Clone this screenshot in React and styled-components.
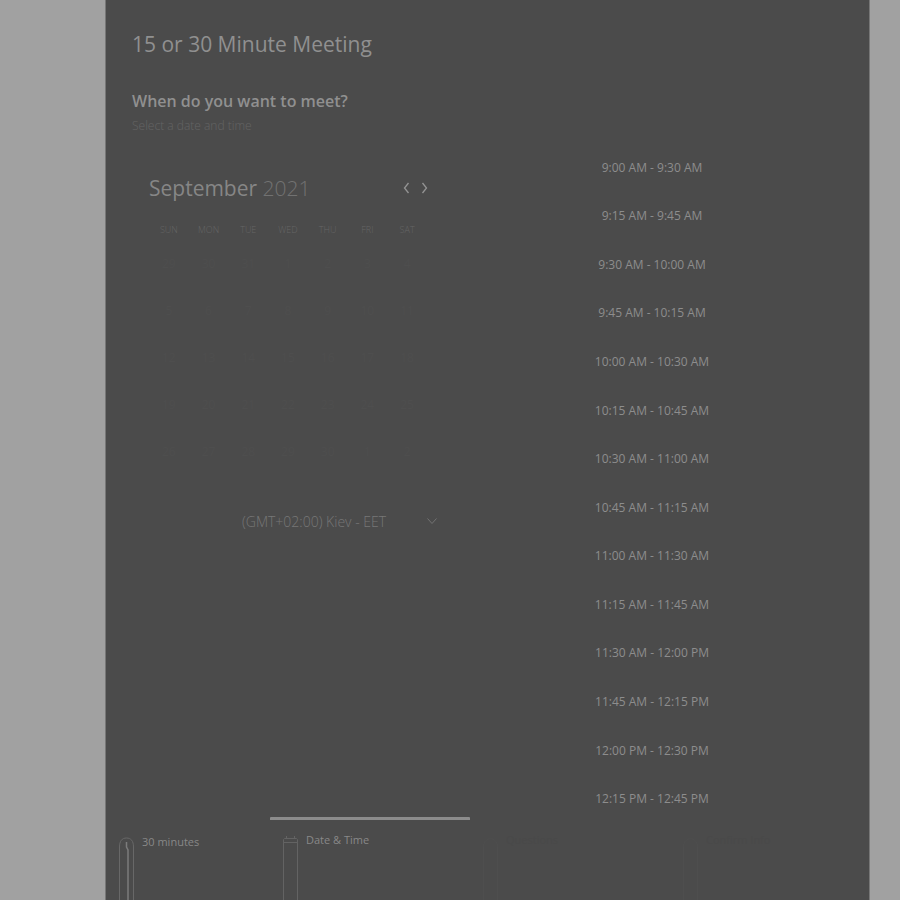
import React, { useState } from "react";
import styled, { createGlobalStyle } from "styled-components";

const GlobalStyle = createGlobalStyle`
  *, *::before, *::after { box-sizing: border-box; }
  body {
    margin: 0;
    background: #a1a1a1;
    color: #909090;
    font-family: "Open Sans", sans-serif;
  }
  button, select { font: inherit; color: inherit; background: none; border: 0; padding: 0; }
`;

const Panel = styled.main`
  display: flex;
  flex-direction: column;
  height: 100vh;
  margin: 0 30px 0 105px;
  overflow: hidden;
  background: #4b4b4b;
  border: solid #777;
  border-width: 0 1px;
`;

const Header = styled.header`
  padding: 28px 26px 8px;
`;

const Title = styled.h1`
  margin: 0 0 25px;
  font-size: 21px;
  line-height: 32px;
  font-weight: 400;
`;

const Question = styled.h2`
  margin: 0;
  font-size: 16px;
  line-height: 32px;
  font-weight: 600;
`;

const Hint = styled.p`
  margin: 0;
  font-size: 12px;
  line-height: 18px;
  font-weight: 300;
  color: #646464;
`;

const Body = styled.div`
  display: grid;
  grid-template-columns: 4fr 5fr;
  padding: 0 17px 0 26px;
`;

const DateColumn = styled.section`
  display: flex;
  flex-direction: column;
  padding: 29px 14px 0 17px;
`;

const MonthBar = styled.div`
  display: flex;
  align-items: center;
  justify-content: space-between;
  line-height: 32px;
`;

const Month = styled.h3`
  margin: 0;
  font-size: 21px;
  font-weight: 400;
  color: #868686;
`;

const Year = styled.span`
  font-weight: 300;
  color: #727272;
`;

const Arrows = styled.div`
  display: flex;
  gap: 8px;
  margin-right: 9px;
`;

const ArrowButton = styled.button`
  display: flex;
  width: 10px;
  height: 16px;
  align-items: center;
  justify-content: center;
  color: #949494;
`;

const Calendar = styled.table`
  width: 278px;
  margin-top: 16px;
  table-layout: fixed;
  border-collapse: collapse;
  text-align: center;
`;

const Weekday = styled.th`
  height: 20px;
  padding: 0;
  font-size: 9px;
  line-height: 20px;
  font-weight: 300;
  color: #656565;
`;

const DayCell = styled.td`
  height: 47px;
  padding: 0;
  font-size: 12px;
  color: #4e4e4e;
`;

const ZoneField = styled.label`
  display: grid;
  grid-template-columns: 1fr 12px;
  align-items: center;
  align-self: flex-end;
  width: 196px;
  margin-top: 30px;
  color: #727272;
`;

const ZoneSelect = styled.select`
  grid-area: 1 / 1 / 2 / 3;
  height: 32px;
  appearance: none;
  font-size: 14px;
  font-weight: 300;
  color: #777;
`;

const ZoneIcon = styled.svg`
  grid-area: 1 / 2;
  pointer-events: none;
`;

const SlotList = styled.ul`
  display: grid;
  grid-auto-rows: 1fr;
  min-height: 680px;
  margin: 0;
  padding: 0;
  list-style: none;
`;

const SlotItem = styled.li`
  display: grid;
`;

const SlotButton = styled.button`
  font-size: 12px;
  color: #8d8d8d;
  cursor: pointer;
`;

const Steps = styled.nav`
  display: grid;
  grid-template-columns: 164fr 200fr 200fr 199fr;
  flex: 1;
  margin-top: -6px;
`;

const Step = styled.button`
  display: flex;
  align-items: flex-start;
  gap: 7px;
  padding: ${(p) => (p.$first ? "17px 0 0 12px" : "15px 0 0 12px")};
  border-top: 3px solid ${(p) => (p.$active ? "#8c8c8c" : "transparent")};
  border-radius: 1px;
  font-size: 11px;
  line-height: 10px;
  color: ${(p) => (p.$muted ? "#494949" : "#888")};
`;

const StepIcon = styled.svg`
  flex: none;
`;

const times = [
  "9:00 AM", "9:15 AM", "9:30 AM", "9:45 AM", "10:00 AM", "10:15 AM", "10:30 AM", "10:45 AM",
  "11:00 AM", "11:15 AM", "11:30 AM", "11:45 AM", "12:00 PM", "12:15 PM", "12:30 PM", "12:45 PM",
];
const slots = times.slice(0, 14).map((start, i) => `${start} - ${times[i + 2]}`);
const weekdays = ["SUN", "MON", "TUE", "WED", "THU", "FRI", "SAT"];
const weeks = [
  [29, 30, 31, 1, 2, 3, 4],
  [5, 6, 7, 8, 9, 10, 11],
  [12, 13, 14, 15, 16, 17, 18],
  [19, 20, 21, 22, 23, 24, 25],
  [26, 27, 28, 29, 30, 1, 2],
];

function Chevron({ d }) {
  return (
    <svg width="7" height="12" viewBox="0 0 7 12" fill="none" stroke="currentColor" strokeWidth="1.3" aria-hidden="true">
      <path d={d} />
    </svg>
  );
}

function ClockIcon() {
  return (
    <StepIcon width="17" height="100" viewBox="0 0 17 100" fill="none" aria-hidden="true">
      <path d="M1.500 100V10C1.500 4 4 1 8.500 1S15.500 4 15.500 10V100" stroke="#686868" />
      <path d="M8.500 5V10L10 13V100" stroke="#7c7c7c" strokeWidth="1.500" />
    </StepIcon>
  );
}

function CalendarIcon() {
  return (
    <StepIcon width="17" height="100" viewBox="0 0 17 100" fill="none" stroke="#636363" aria-hidden="true">
      <path d="M1.500 100V4.500L2.500 3.500H14.500L15.500 4.500V100M1.500 7.500H15.500M4.500 1V4M12.500 1V4" />
    </StepIcon>
  );
}

function PersonIcon() {
  return (
    <StepIcon width="17" height="100" viewBox="0 0 17 100" fill="none" stroke="#4e4e4e" aria-hidden="true">
      <path d="M1.500 100V12C1.500 1 15.500 1 15.500 12V100" />
    </StepIcon>
  );
}

export default function App() {
  const [zone, setZone] = useState("eet");
  return (
    <>
      <GlobalStyle />
      <Panel>
        <Header>
          <Title>15 or 30 Minute Meeting</Title>
          <Question>When do you want to meet?</Question>
          <Hint>Select a date and time</Hint>
        </Header>
        <Body>
          <DateColumn>
            <MonthBar>
              <Month>September <Year>2021</Year></Month>
              <Arrows>
                <ArrowButton aria-label="Previous month"><Chevron d="M5.500 1L1.500 6L5.500 11" /></ArrowButton>
                <ArrowButton aria-label="Next month"><Chevron d="M1.500 1L5.500 6L1.500 11" /></ArrowButton>
              </Arrows>
            </MonthBar>
            <Calendar>
              <thead>
                <tr>{weekdays.map((d) => <Weekday key={d} scope="col">{d}</Weekday>)}</tr>
              </thead>
              <tbody>
                {weeks.map((week) => (
                  <tr key={week[0]}>{week.map((d) => <DayCell key={d}>{d}</DayCell>)}</tr>
                ))}
              </tbody>
            </Calendar>
            <ZoneField>
              <ZoneSelect aria-label="Time zone" value={zone} onChange={(e) => setZone(e.target.value)}>
                <option value="eet">(GMT+02:00) Kiev - EET</option>
              </ZoneSelect>
              <ZoneIcon width="12" height="8" viewBox="0 0 12 8" fill="none" stroke="currentColor" aria-hidden="true">
                <path d="M1.500 1.500L6 6.500L10.500 1.500" />
              </ZoneIcon>
            </ZoneField>
          </DateColumn>
          <SlotList>
            {slots.map((s) => <SlotItem key={s}><SlotButton>{s}</SlotButton></SlotItem>)}
          </SlotList>
        </Body>
        <Steps aria-label="Booking steps">
          <Step $first><ClockIcon />30 minutes</Step>
          <Step $active aria-current="step"><CalendarIcon />Date &amp; Time</Step>
          <Step $muted><PersonIcon />Questions</Step>
          <Step $muted><PersonIcon />Confirm Info</Step>
        </Steps>
      </Panel>
    </>
  );
}
